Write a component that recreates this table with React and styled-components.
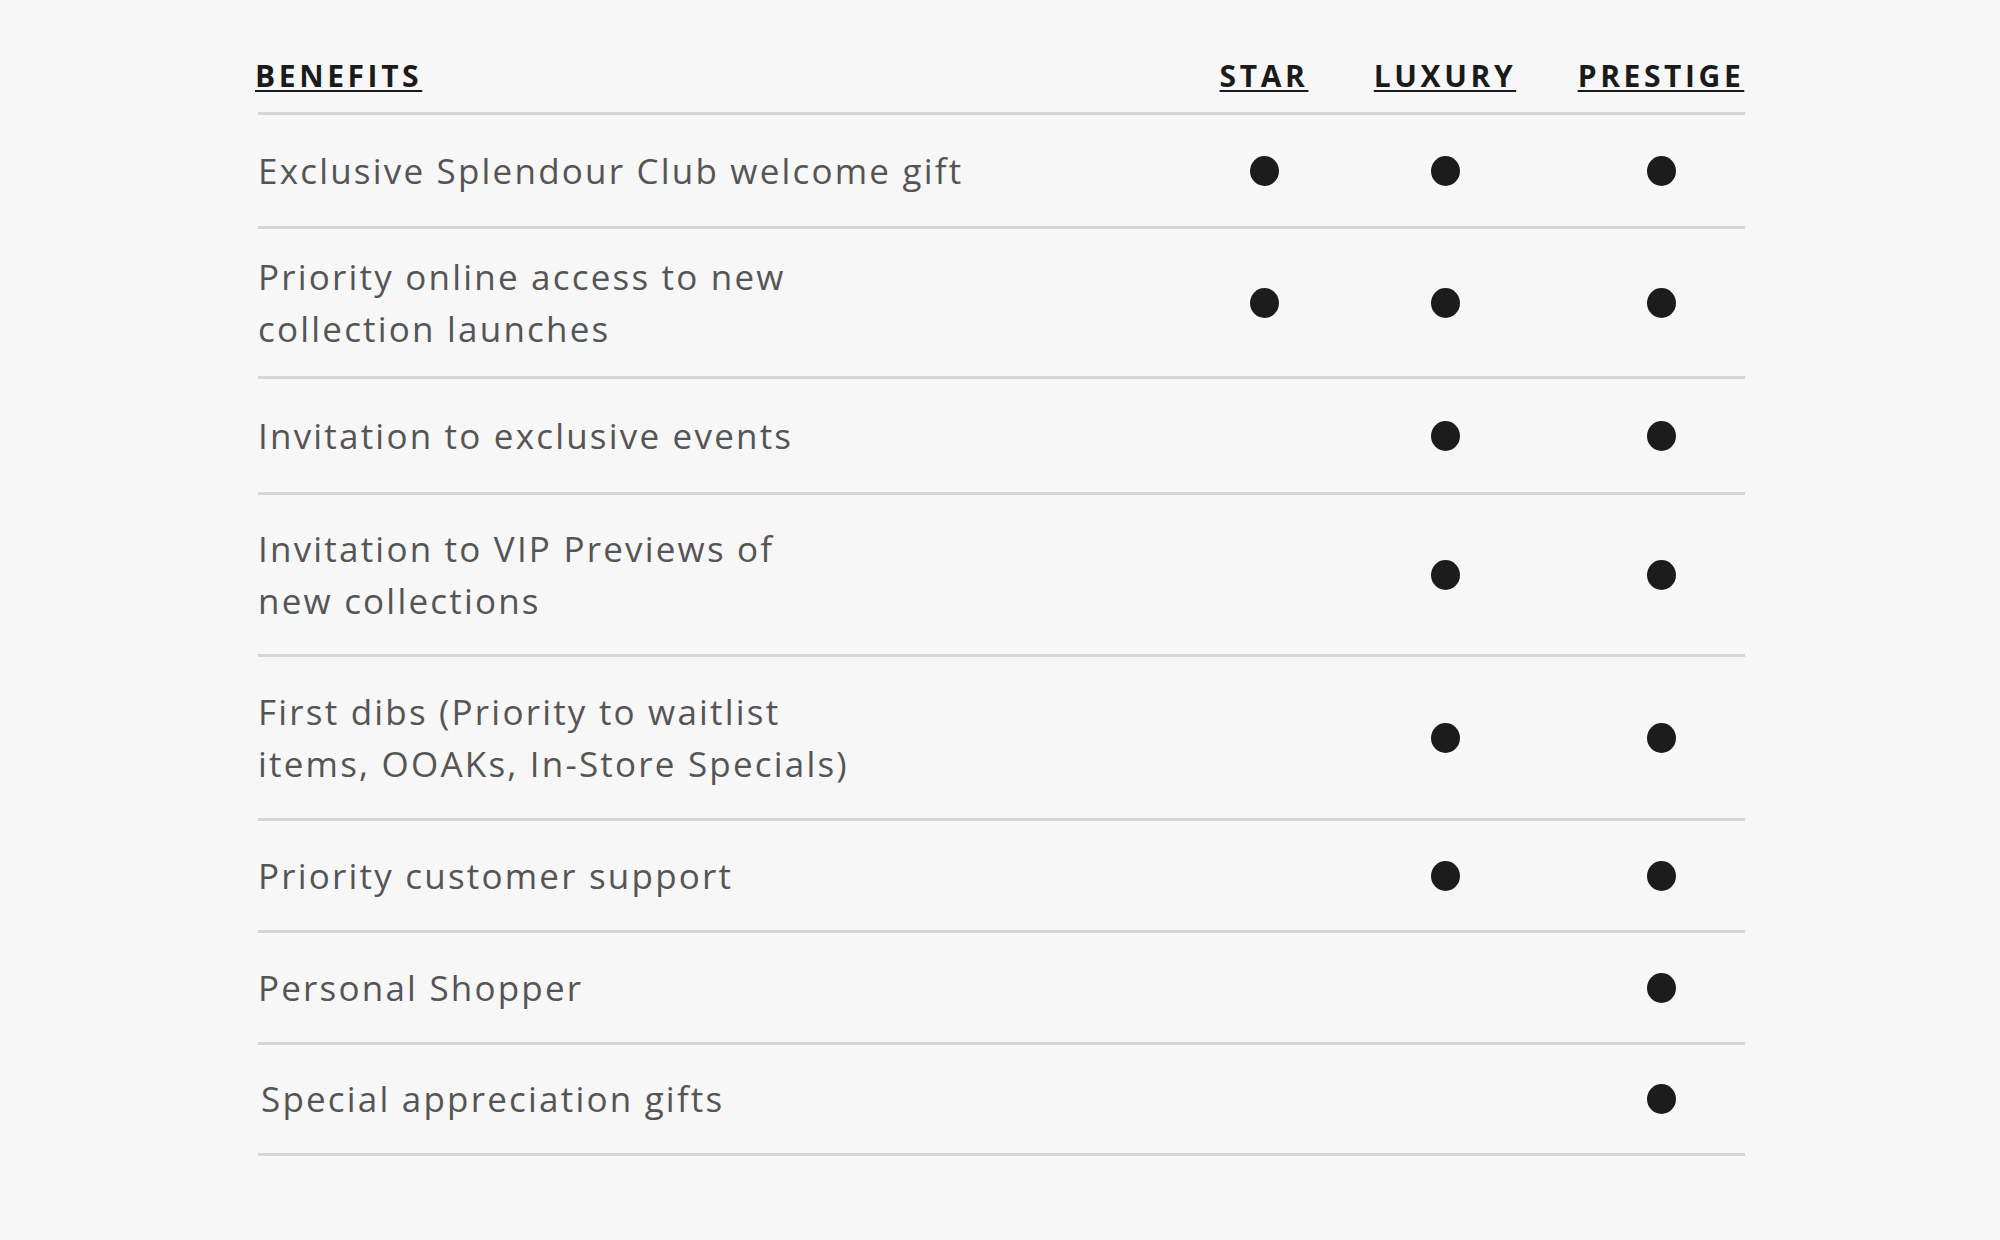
import React from 'react'
import styled, { createGlobalStyle } from 'styled-components'

const GlobalStyle = createGlobalStyle`
  * { box-sizing: border-box; }
  body {
    margin: 0;
    background: #f7f7f7;
    font-family: "Open Sans", "Liberation Sans", sans-serif;
  }
`

const Page = styled.div`
  min-height: 1240px;
  padding-left: 258px;
`

const Table = styled.div`
  width: 1487px;
  display: flex;
  flex-direction: column;
`

const Row = styled.div`
  display: grid;
  grid-template-columns: 957px 98px 264px 168px;
  align-items: ${(p) => (p.head ? 'end' : 'center')};
  height: ${(p) => p.h}px;
  padding-bottom: ${(p) => (p.head ? 16 : 0)}px;
  border-bottom: 3px solid #d5d5d5;
`

const HeadCell = styled.div`
  font-size: 30px;
  line-height: 40px;
  font-weight: 700;
  letter-spacing: 3.6px;
  text-transform: uppercase;
  color: #1b1b1b;
  text-decoration: underline;
  text-decoration-thickness: 2px;
  text-underline-offset: 3px;
  text-align: ${(p) => (p.center ? 'center' : 'left')};
  margin-left: ${(p) => (p.center ? 0 : -3)}px;
`

const Benefit = styled.div`
  font-size: 35px;
  line-height: 52px;
  letter-spacing: 2.2px;
  color: #555;
  padding-left: ${(p) => (p.indent ? 3 : 0)}px;
`

const Cell = styled.div`
  display: flex;
  justify-content: center;
  align-items: center;
`

const Dot = styled.span`
  width: 29px;
  height: 30px;
  border-radius: 50%;
  background: #1c1c1c;
`

const rows = [
  { text: ['Exclusive Splendour Club welcome gift'], tiers: [1, 1, 1], h: 114 },
  { text: ['Priority online access to new', 'collection launches'], tiers: [1, 1, 1], h: 150 },
  { text: ['Invitation to exclusive events'], tiers: [0, 1, 1], h: 116 },
  { text: ['Invitation to VIP Previews of', 'new collections'], tiers: [0, 1, 1], h: 162 },
  { text: ['First dibs (Priority to waitlist', 'items, OOAKs, In-Store Specials)'], tiers: [0, 1, 1], h: 164 },
  { text: ['Priority customer support'], tiers: [0, 1, 1], h: 112 },
  { text: ['Personal Shopper'], tiers: [0, 0, 1], h: 112 },
  { text: ['Special appreciation gifts'], tiers: [0, 0, 1], h: 111, indent: true },
]

const App = () => {
  return (
    <Page>
      <GlobalStyle />
      <Table>
        <Row head h={115}>
          <HeadCell>Benefits</HeadCell>
          <HeadCell center>Star</HeadCell>
          <HeadCell center>Luxury</HeadCell>
          <HeadCell center>Prestige</HeadCell>
        </Row>
        {rows.map((r) => (
          <Row key={r.text[0]} h={r.h}>
            <Benefit indent={r.indent}>
              {r.text.map((line, i) => (
                <React.Fragment key={line}>
                  {i > 0 && <br />}
                  {line}
                </React.Fragment>
              ))}
            </Benefit>
            {r.tiers.map((on, i) => (
              <Cell key={i}>{on ? <Dot /> : null}</Cell>
            ))}
          </Row>
        ))}
      </Table>
    </Page>
  )
}

export default App
